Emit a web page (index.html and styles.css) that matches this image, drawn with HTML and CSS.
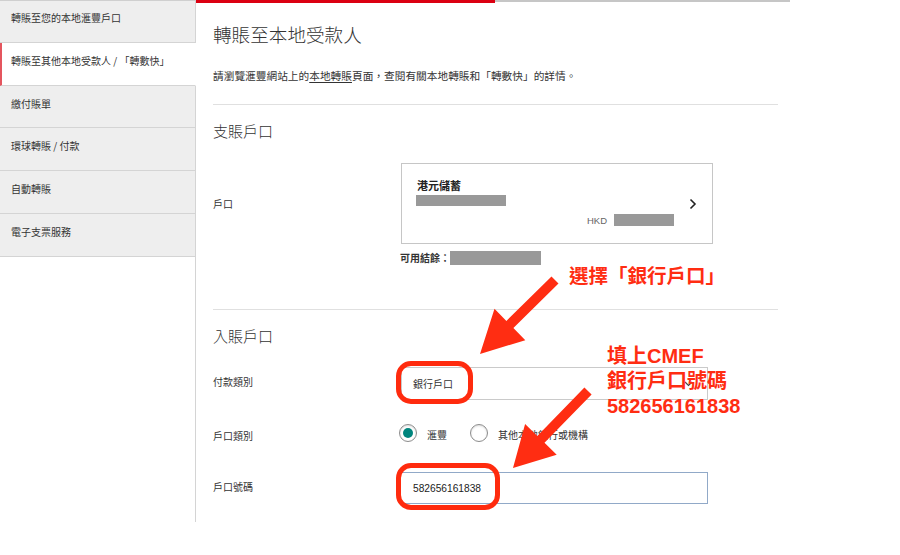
FILE: index.html
```html
<!DOCTYPE html>
<html lang="zh-Hant">
<head>
<meta charset="utf-8">
<title>轉賬至本地受款人</title>
<link rel="stylesheet" href="styles.css">
</head>
<body>
<div class="page">
  <nav class="sidebar">
    <a class="nav-item first">轉賬至您的本地滙豐戶口</a>
    <a class="nav-item active">轉賬至其他本地受款人 / 「轉數快」</a>
    <a class="nav-item">繳付賬單</a>
    <a class="nav-item">環球轉賬 / 付款</a>
    <a class="nav-item">自動轉賬</a>
    <a class="nav-item">電子支票服務</a>
    <div class="nav-fill"></div>
  </nav>
  <main class="main">
    <div class="progress"><div class="progress-fill"></div><div class="progress-rest"></div></div>
    <div class="content">
      <h1 class="title">轉賬至本地受款人</h1>
      <p class="intro">請瀏覽滙豐網站上的<u>本地轉賬</u>頁面，查閱有關本地轉賬和「轉數快」的詳情。</p>
      <hr class="divider">
      <h2 class="section-title">支賬戶口</h2>
      <div class="form-row row-account">
        <div class="label">戶口</div>
        <div class="account-card">
          <div class="account-info">
            <div class="account-name">港元儲蓄</div>
            <div class="mask mask-number"></div>
            <div class="account-bal"><span class="ccy">HKD</span><span class="mask mask-bal"></span></div>
          </div>
          <div class="account-chevron">
            <svg width="8" height="12" viewBox="0 0 8 12"><path d="M1.5 1.5 L6 6 L1.5 10.5" fill="none" stroke="#222" stroke-width="1.6"/></svg>
          </div>
        </div>
      </div>
      <div class="balance-row"><span class="balance-label">可用結餘：</span><span class="mask mask-avail"></span></div>
      <hr class="divider divider-2">
      <h2 class="section-title">入賬戶口</h2>
      <div class="form-row row-type">
        <div class="label label-up">付款類別</div>
        <div class="select">
          <span>銀行戶口</span>
          <svg class="select-arrow" width="9" height="6" viewBox="0 0 9 6"><path d="M1 1 L4.5 4.5 L8 1" fill="none" stroke="#444" stroke-width="1.2"/></svg>
        </div>
      </div>
      <div class="form-row row-radio">
        <div class="label label-down">戶口類別</div>
        <div class="radios">
          <label class="radio"><span class="radio-circle checked"></span><span class="radio-text">滙豐</span></label>
          <label class="radio"><span class="radio-circle"></span><span class="radio-text">其他本地銀行或機構</span></label>
        </div>
      </div>
      <div class="form-row row-number">
        <div class="label label-up">戶口號碼</div>
        <div class="text-input">582656161838</div>
      </div>
    </div>
  </main>
</div>
<div class="annotations">
  <svg class="arrows" width="900" height="555" viewBox="0 0 900 555">
    <polygon fill="#ff2d12" points="558.5,283.6 513.4,328.1 525.3,340.2 480,354 494.5,308.8 506.4,320.9 551.5,276.4"/>
    <polygon fill="#ff2d12" points="591.6,394.5 544.5,442.8 556.7,454.7 513,468 525.1,424 537.3,435.9 584.4,387.5"/>
  </svg>
  <div class="hl hl-type"></div>
  <div class="hl hl-number"></div>
  <div class="note note-1">選擇「銀行戶口」</div>
  <div class="note note-2">填上CMEF<br>銀行戶口號碼<br>582656161838</div>
</div>
</body>
</html>
```

FILE: styles.css
```css
* { box-sizing: border-box; }
html, body { margin: 0; padding: 0; }
body {
  width: 900px;
  height: 555px;
  position: relative;
  overflow: hidden;
  background: #fff;
  color: #333;
  font-family: "Noto Sans CJK TC", "Noto Sans CJK SC", sans-serif;
}

.page { display: flex; width: 790px; height: 522px; }

/* sidebar */
.sidebar { width: 196px; flex: none; display: flex; flex-direction: column; }
.nav-item {
  display: block;
  height: 42.8px;
  padding: 11px 0 0 11px;
  font-size: 10px;
  line-height: 14px;
  color: #333;
  background: #eeeeee;
  border-bottom: 1px solid #d4d4d4;
  border-right: 1px solid #d4d4d4;
  white-space: nowrap;
}
.nav-item.first { border-top: 1px solid #cfcfcf; padding-top: 10px; }
.nav-item.active {
  background: #fff;
  border-left: 2px solid #e4555e;
  border-right-color: #fff;
  padding-left: 9px;
}
.nav-fill { flex: 1; border-right: 1px solid #d4d4d4; }

/* main */
.main { flex: 1; display: flex; flex-direction: column; }
.progress { display: flex; height: 3px; }
.progress-fill { width: 299px; background: #db0011; }
.progress-rest { flex: 1; border-top: 2px solid #c6c6c6; }

.content { padding: 19px 12px 0 17px; }
.title { margin: 0; font-size: 18.6px; line-height: 24px; font-weight: 300; color: #333; }
.intro { margin: 22px 0 0; font-size: 10.7px; line-height: 16px; color: #333; }
.intro u { text-underline-offset: 2px; }
.divider { margin: 20px 0 0; height: 0; border: 0; border-top: 1px solid #e0e0e0; }
.divider-2 { margin-top: 44px; }
.section-title { margin: 16px 0 0; font-size: 15px; line-height: 20px; font-weight: 300; color: #333; }

.form-row { display: flex; align-items: center; }
.label { width: 188px; flex: none; font-size: 10px; line-height: 14px; color: #333; }
.label-up { margin-top: -3px; }
.label-down { margin-top: 6px; }

.row-account { margin-top: 22px; }
.account-card { width: 312px; height: 81px; border: 1px solid #c6c6c6; display: flex; }
.account-info { flex: 1; padding: 14px 0 0 14px; display: flex; flex-direction: column; }
.account-name { font-size: 11px; line-height: 14px; font-weight: 700; color: #222; padding-left: 1px; }
.mask { display: block; background: #999; }
.mask-number { width: 90px; height: 11px; margin-top: 3px; }
.account-bal { display: flex; justify-content: flex-end; align-items: center; gap: 7px; margin-top: 8px; }
.ccy { font-family: "Liberation Sans", sans-serif; font-size: 9.5px; color: #666; }
.mask-bal { width: 60px; height: 12px; }
.account-chevron { width: 38px; flex: none; display: flex; align-items: center; justify-content: center; }

.balance-row { display: flex; align-items: center; margin-top: 7px; padding-left: 187px; }
.balance-label { font-size: 10px; line-height: 14px; font-weight: 700; color: #333; }
.mask-avail { width: 91px; height: 14px; }

.row-type { margin-top: 21px; }
.select {
  width: 307px;
  height: 33px;
  border: 1px solid #cacaca;
  display: flex;
  align-items: center;
  justify-content: space-between;
  padding: 0 14px 0 11px;
  font-size: 10px;
  color: #333;
}

.row-radio { margin-top: 20px; height: 26px; }
.radios { display: flex; align-items: center; gap: 23px; margin-left: -2px; }
.radio { display: flex; align-items: center; gap: 10px; font-size: 10px; color: #333; }
.radio-text { margin-top: 3px; }
.radio-circle {
  width: 18px; height: 18px;
  border-radius: 50%;
  border: 1px solid #8c8c8c;
  background: #fff;
  box-shadow: inset 0 1px 2px rgba(0,0,0,0.15);
  display: flex; align-items: center; justify-content: center;
}
.radio-circle.checked::after {
  content: "";
  width: 10px; height: 10px;
  border-radius: 50%;
  background: #00857d;
}

.row-number { margin-top: 26px; }
.text-input {
  width: 308px;
  height: 32px;
  margin-left: -1px;
  border: 1px solid #91a9c8;
  display: flex;
  align-items: center;
  padding-left: 12px;
  font-family: "Liberation Sans", sans-serif;
  font-size: 10.2px;
  color: #222;
}

/* annotation overlay */
.annotations { position: absolute; left: 0; top: 0; width: 900px; height: 555px; pointer-events: none; }
.arrows { position: absolute; left: 0; top: 0; }
.hl { position: absolute; border: 5px solid #ff2b0e; border-radius: 15px; }
.hl-type { left: 396px; top: 361px; width: 77px; height: 43px; }
.hl-number { left: 396px; top: 463px; width: 104px; height: 47px; }
.note {
  position: absolute;
  font-family: "Liberation Sans", "Noto Sans CJK TC", sans-serif;
  font-weight: 700;
  font-size: 20px;
  line-height: 25px;
  color: #ff2d12;
  white-space: nowrap;
}
.note-1 { left: 569px; top: 264px; font-size: 19.5px; }
.note-2 { left: 607px; top: 344px; }
```
